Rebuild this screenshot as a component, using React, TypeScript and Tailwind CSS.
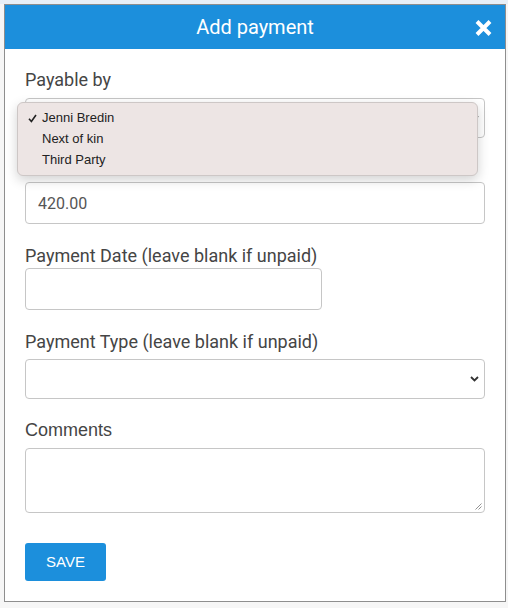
import React from 'react';

const label = "block text-[18px] leading-[24px] text-[#454545] font-['Roboto',sans-serif]";

const Chevron = () => (
  <svg width="9" height="6" viewBox="0 0 9 6" className="text-[#333]">
    <path d="M1 1l3.5 3.5L8 1" fill="none" stroke="currentColor" strokeWidth="1.8" />
  </svg>
);

const FakeSelect = () => (
  <div className="h-[40px] w-full rounded-[4px] border border-[#c6c6c6] bg-white flex items-center justify-end pr-[5px]">
    <Chevron />
  </div>
);

const options = ['Jenni Bredin', 'Next of kin', 'Third Party'];

export default function App() {
  return (
    <div className="h-[608px] w-[508px] bg-[#f6f6f6] overflow-hidden">
      {/* top strip */}
      <div className="h-[4px] bg-[#e7eff7]" />

      {/* MODAL */}
      <div className="ml-[4px] w-[502px] border border-[#8e8e8e] bg-white">
        {/* HEADER */}
        <div className="relative h-[44px] bg-[#1c8fdc] flex items-center justify-center">
          <h1 className="text-[20px] text-white font-['Roboto',sans-serif] leading-none">Add payment</h1>
          <button className="absolute right-[13px] top-[15px]">
            <svg width="17" height="16" viewBox="0 0 17 16">
              <path d="M2 1.5l13 13M15 1.5l-13 13" stroke="white" strokeWidth="4" />
            </svg>
          </button>
        </div>

        {/* BODY */}
        <div className="relative px-[20px] pt-[19px] pb-[20px]">
          <label className={label}>Payable by</label>
          <div className="mt-[6px]">
            <FakeSelect />
          </div>

          <label className={`${label} mt-[20px]`}>Amount</label>
          <input
            readOnly
            value="420.00"
            className="block h-[42px] w-full rounded-[4px] border border-[#c6c6c6] px-[12px] text-[16px] text-[#555] font-['Roboto',sans-serif] outline-none"
          />

          <label className={`${label} mt-[20px]`}>Payment Date (leave blank if unpaid)</label>
          <input readOnly className="block h-[42px] w-[297px] rounded-[4px] border border-[#c6c6c6] outline-none" />

          <label className={`${label} mt-[20px]`}>Payment Type (leave blank if unpaid)</label>
          <div className="mt-[5px]">
            <FakeSelect />
          </div>

          <label className="block mt-[19px] text-[18px] leading-[24px] text-[#454545] font-['Liberation_Sans',sans-serif]">Comments</label>
          <div className="relative mt-[6px] h-[65px] w-full rounded-[4px] border border-[#c6c6c6]">
            <svg width="7" height="7" viewBox="0 0 7 7" className="absolute right-[2px] bottom-[2px]">
              <path d="M6.5 0.5l-6 6M6.5 3.5l-3 3" stroke="#777" strokeWidth="0.8" />
            </svg>
          </div>

          <button className="mt-[30px] h-[38px] w-[81px] rounded-[3px] bg-[#1c8fdc] text-white text-[15px] font-['Liberation_Sans',sans-serif]">
            SAVE
          </button>

          {/* OPEN DROPDOWN */}
          <div className="absolute left-[12px] top-[53px] w-[461px] h-[74px] rounded-[6px] border border-[#cdc7c6] bg-[#ede5e4] shadow-[0_4px_12px_rgba(0,0,0,0.18)] pt-[4px] font-['Liberation_Sans',sans-serif] text-[13px] text-[#222]">
            {options.map((o, i) => (
              <div key={o} className="relative h-[21px] leading-[21px] pl-[24px]">
                {i === 0 && (
                  <svg width="9" height="9" viewBox="0 0 9 9" className="absolute left-[10px] top-[7px]">
                    <path d="M1 4.8l2.4 2.7L8 1" fill="none" stroke="#222" strokeWidth="1.6" />
                  </svg>
                )}
                {o}
              </div>
            ))}
          </div>
        </div>
      </div>
    </div>
  );
}
